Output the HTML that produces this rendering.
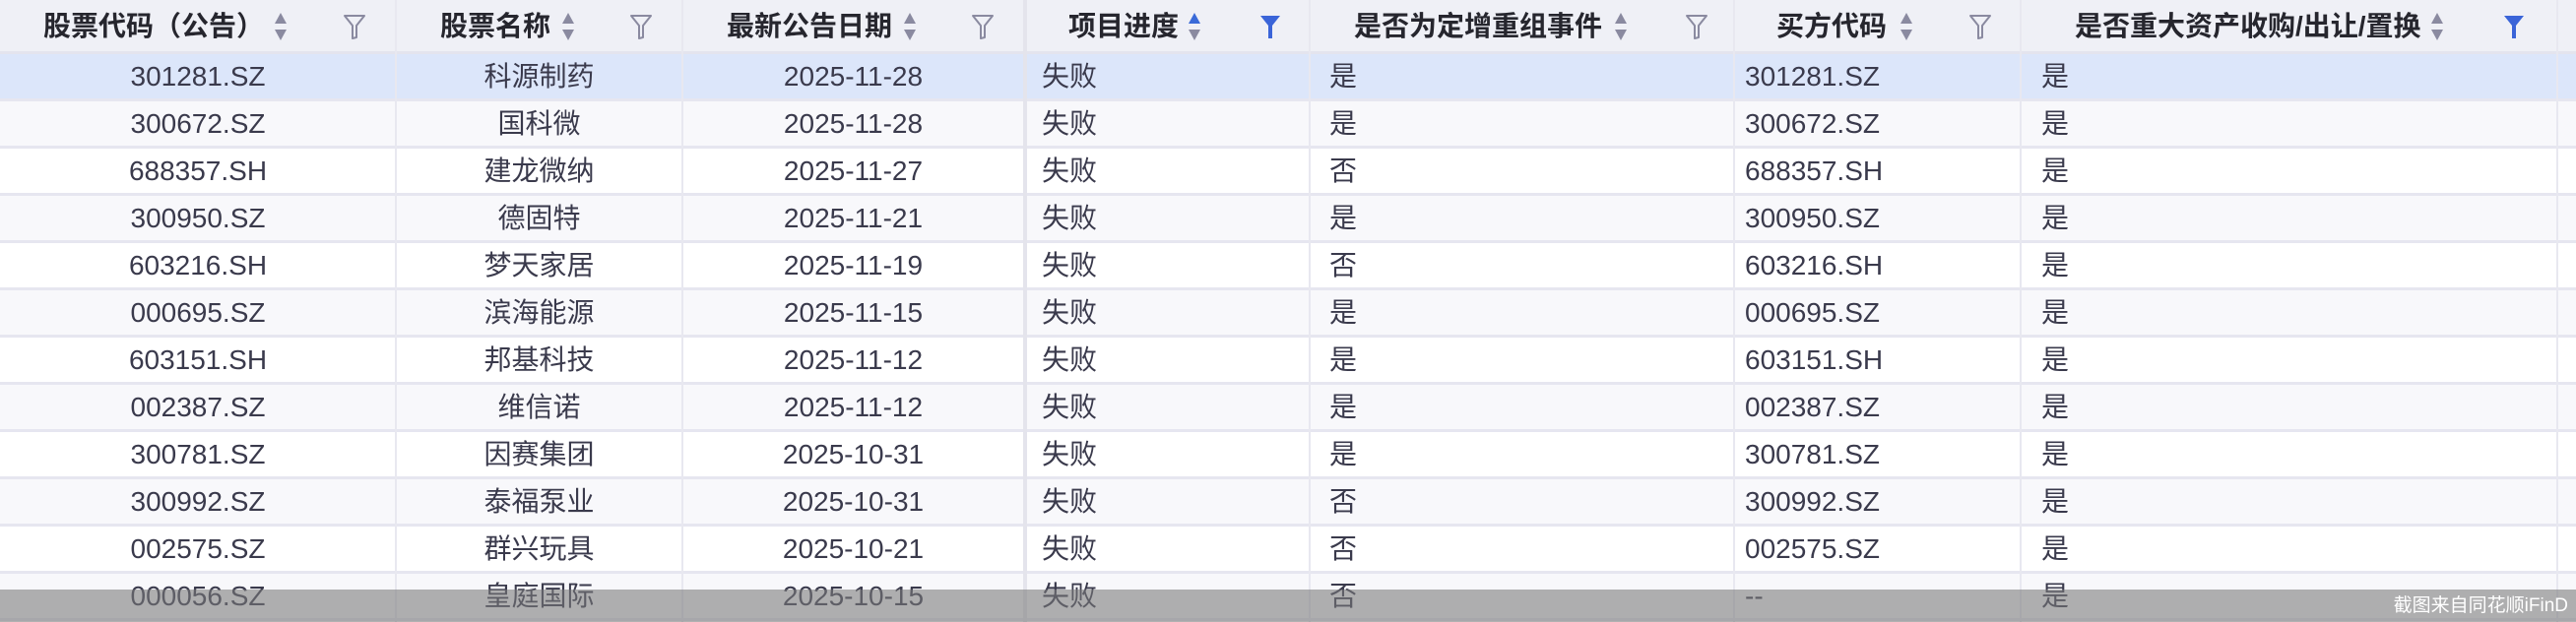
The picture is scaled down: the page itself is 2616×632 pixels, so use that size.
<!DOCTYPE html>
<html><head><meta charset="utf-8"><style>
*{margin:0;padding:0;box-sizing:border-box}
body{width:2616px;height:632px;overflow:hidden;background:#fff;font-family:"Liberation Sans","Noto Sans CJK SC",sans-serif;position:relative}
.hdr{position:absolute;left:0;top:0;width:2616px;height:55px;background:#eff0f6;border-bottom:3px solid #e4e4ee}
.h{position:absolute;top:0;height:54px;line-height:54px;font-size:28px;font-weight:bold;color:#26262e;white-space:nowrap}
.row{position:absolute;left:0;width:2616px;height:48px;border-bottom:3px solid #e6e6f0}
.c{position:absolute;font-size:28px;color:#3a3a4c;line-height:46px;white-space:nowrap}
.vl{position:absolute;top:0;width:2px;height:632px;background:#e8e8f0}
.sort{position:absolute;top:10px;width:16px;height:34px}
.flt{position:absolute;top:13px;width:24px;height:28px}
.ov{position:absolute;left:0;top:599px;width:2616px;height:33px;background:rgba(120,120,120,0.58)}
.wm{position:absolute;right:8px;top:599px;line-height:33px;font-size:19px;color:#fff}
</style></head><body>
<div class="hdr"></div>
<div id="rows"></div>
<div class="vl" style="left:401px"></div>
<div class="vl" style="left:692px"></div>
<div class="vl" style="left:1039px;width:4px;background:#e4e4ec"></div>
<div class="vl" style="left:1329px"></div>
<div class="vl" style="left:1760px"></div>
<div class="vl" style="left:2051px"></div>
<div class="vl" style="left:2596px"></div>

<div class="h" style="left:44px">股票代码（公告）</div>
<div class="h" style="left:447px">股票名称</div>
<div class="h" style="left:738px">最新公告日期</div>
<div class="h" style="left:1085px">项目进度</div>
<div class="h" style="left:1375px">是否为定增重组事件</div>
<div class="h" style="left:1804px">买方代码</div>
<div class="h" style="left:2107px">是否重大资产收购/出让/置换</div>

<div class="ov"></div>
<div class="wm">截图来自同花顺iFinD</div>

<script>
const data=[
["301281.SZ","科源制药","2025-11-28","是","301281.SZ"],
["300672.SZ","国科微","2025-11-28","是","300672.SZ"],
["688357.SH","建龙微纳","2025-11-27","否","688357.SH"],
["300950.SZ","德固特","2025-11-21","是","300950.SZ"],
["603216.SH","梦天家居","2025-11-19","否","603216.SH"],
["000695.SZ","滨海能源","2025-11-15","是","000695.SZ"],
["603151.SH","邦基科技","2025-11-12","是","603151.SH"],
["002387.SZ","维信诺","2025-11-12","是","002387.SZ"],
["300781.SZ","因赛集团","2025-10-31","是","300781.SZ"],
["300992.SZ","泰福泵业","2025-10-31","否","300992.SZ"],
["002575.SZ","群兴玩具","2025-10-21","否","002575.SZ"],
["000056.SZ","皇庭国际","2025-10-15","否","--"]];
let h="";
data.forEach((d,i)=>{
 const top=55+i*48;
 const bg=i==0?"#dce6fa":(i%2==1?"#f8f8fb":"#fff");
 h+=`<div class="row" style="top:${top}px;background:${bg}">
 <div class="c" style="left:0;width:402px;text-align:center">${d[0]}</div>
 <div class="c" style="left:402px;width:291px;text-align:center">${d[1]}</div>
 <div class="c" style="left:693px;width:347px;text-align:center">${d[2]}</div>
 <div class="c" style="left:1058px">失败</div>
 <div class="c" style="left:1350px">${d[3]}</div>
 <div class="c" style="left:1772px">${d[4]}</div>
 <div class="c" style="left:2073px">是</div></div>`;
});
document.getElementById("rows").innerHTML=h;
function sort(x,blue){return `<svg class="sort" style="left:${x}px" viewBox="0 0 16 34"><path d="M8 3 L14 14 L2 14Z" fill="${blue?'#3a6ad8':'#8a8aa0'}"/><path d="M8 31 L14 20 L2 20Z" fill="#8a8aa0"/></svg>`}
function flt(x,blue){return blue?`<svg class="flt" style="left:${x}px" viewBox="0 0 24 28"><path d="M2 3 H22 L14 13 V26 H10 V13Z" fill="#3a64d8"/></svg>`:`<svg class="flt" style="left:${x}px" viewBox="0 0 24 28"><path d="M2 3 H22 L14 13 V25 L10 26 V13Z" fill="none" stroke="#8a8aa0" stroke-width="2" stroke-linejoin="round"/></svg>`}
let s="";
[[277,0],[569,0],[916,0],[1205,1],[1638,0],[1928,0],[2467,0]].forEach(a=>s+=sort(a[0],a[1]));
[[348,0],[639,0],[986,0],[1278,1],[1711,0],[1999,0],[2541,1]].forEach(a=>s+=flt(a[0],a[1]));
document.body.insertAdjacentHTML("beforeend",s);
</script>
</body></html>
